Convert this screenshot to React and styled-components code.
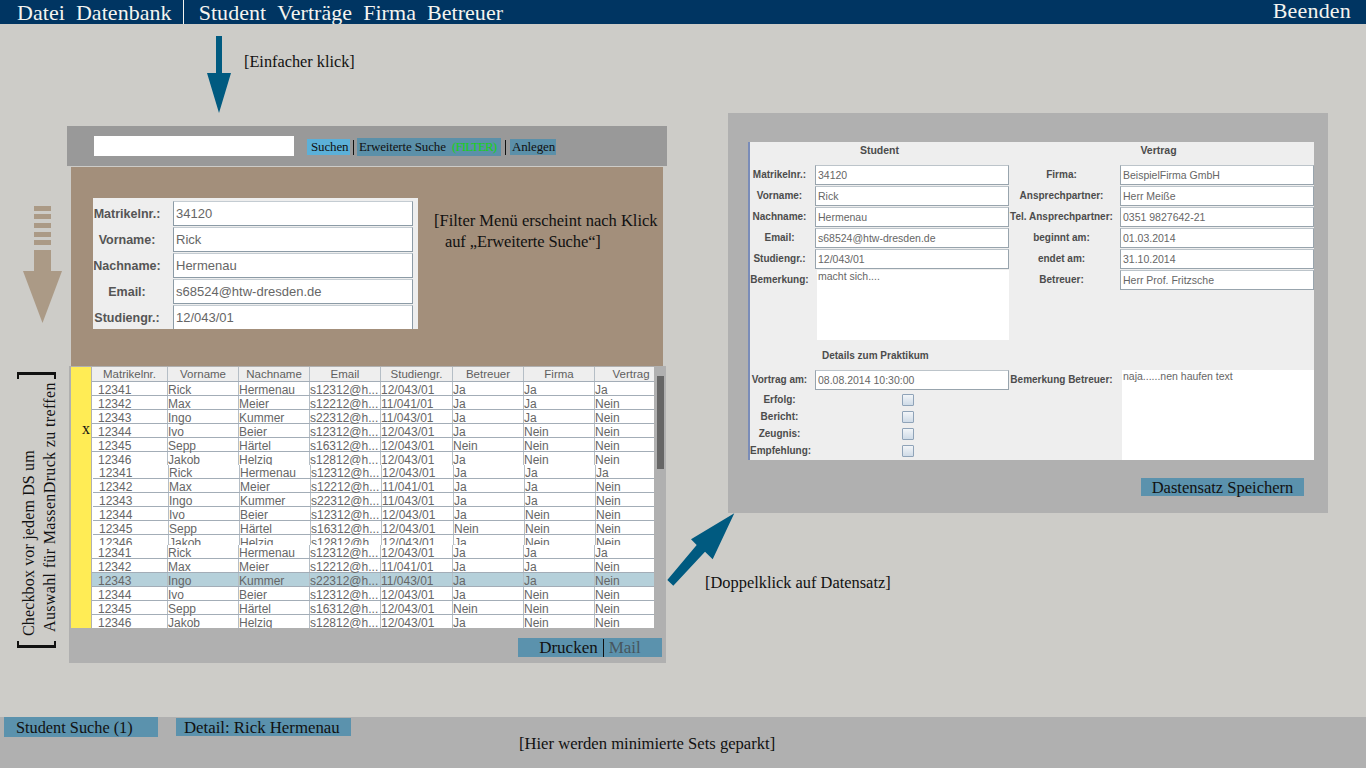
import React from 'react';
import styled, { createGlobalStyle } from 'styled-components';

const serif = '"Liberation Serif", "Times New Roman", serif';
const sans = '"Liberation Sans", Arial, sans-serif';

const GlobalStyle = createGlobalStyle`
    html, body {
        margin: 0;
        padding: 0;
    }
    * {
        box-sizing: border-box;
    }
`;

const Page = styled.div`
    display: flex;
    flex-direction: column;
    width: 1366px;
    height: 768px;
    overflow: hidden;
    background-color: #cdccc8;
    font-family: ${serif};
    color: #111;
`;

/* top menu */
const TopBar = styled.header`
    display: flex;
    justify-content: space-between;
    flex: 0 0 24px;
    height: 24px;
    padding: 0 15px 0 17px;
    overflow: hidden;
    background-color: #003562;
    color: #f4f4f0;
    font-size: 22px;
    line-height: 25px;
    letter-spacing: 0.05px;
`;

const MenuGroup = styled.nav`
    display: flex;
    gap: 11px;
`;

const MenuDivider = styled.span`
    width: 1.5px;
    height: 24px;
    margin-right: 3.5px;
    background-color: #f4f4f0;
`;

const QuitItem = styled.span`
    line-height: 22px;
    letter-spacing: 0.2px;
`;

/* free canvas holding the windows and the notes */
const Canvas = styled.main`
    position: relative;
    display: flex;
    align-items: flex-start;
    flex: 1;
    gap: 61px;
    padding: 89px 0 0 67px;
`;

const MainWindow = styled.section`
    display: flex;
    flex-direction: column;
    width: 600px;
    margin-top: 13px;
`;

const SearchBar = styled.div`
    display: flex;
    align-items: center;
    height: 40px;
    padding-left: 27px;
    background-color: #999999;
    font-size: 13px;
    letter-spacing: -0.15px;
`;

const SearchInput = styled.div`
    width: 200px;
    height: 20px;
    margin-right: 13px;
    background-color: #fff;
`;

const ToolButton = styled.span`
    display: flex;
    align-items: center;
    width: ${({ $width }) => $width}px;
    height: ${({ $tall }) => ($tall ? 18 : 16)}px;
    margin-top: 2px;
    padding-left: ${({ $pad }) => $pad}px;
    background-color: ${({ $light }) => ($light ? '#5cb0d8' : '#5b90a9')};
    white-space: pre;
`;

const ToolDivider = styled.span`
    width: 1px;
    height: 15px;
    margin: 2px ${({ $gap }) => $gap}px 0;
    background-color: #111;
`;

const FilterWord = styled.span`
    color: #17d117;
    letter-spacing: -0.9px;
`;

const FilterPanel = styled.div`
    display: flex;
    gap: 16px;
    height: 199px;
    margin: 1px 4px 0;
    padding: 31px 0 0 22px;
    background-color: #a38f7b;
`;

const FilterForm = styled.div`
    display: grid;
    grid-template-columns: 80px 240px;
    grid-auto-rows: 26px;
    width: 325px;
    height: 131px;
    padding-top: 3px;
    background-color: #eeeeee;
    overflow: hidden;
`;

const FilterLabel = styled.label`
    align-self: center;
    padding-right: 12px;
    font: bold 12.5px ${sans};
    color: #555;
    text-align: center;
    white-space: nowrap;
`;

const FilterField = styled.div`
    height: 25px;
    padding: 4px 0 0 2px;
    background-color: #fff;
    border: 1px solid #8c9ba6;
    border-top-color: #c4ccd2;
    font: 13px ${sans};
    color: #666;
`;

const FilterNote = styled.div`
    padding-top: 12px;
    font-size: 16.5px;
    line-height: 21px;
    white-space: nowrap;
`;

const NoteIndent = styled.span`
    display: block;
    padding-left: 11px;
    letter-spacing: -0.12px;
`;

/* results */
const ResultsArea = styled.div`
    display: flex;
    width: 597px;
    height: 262px;
    margin-left: 2px;
    padding: 1px 0 0 2px;
    background-color: #b0b0b0;
`;

const CheckColumn = styled.div`
    display: flex;
    justify-content: flex-end;
    flex: 0 0 20px;
    margin-right: 1px;
    padding: 53px 1px 0 0;
    background-color: #ffec55;
    font-size: 16px;
`;

const Table = styled.div`
    display: flex;
    flex-direction: column;
    flex: 0 0 561px;
    font: 12px ${sans};
    color: #666;
    background-color: #fff;
`;

const columns = '75px 71px 71px 71px 72px 71px 71px 59px';

const HeaderRow = styled.div`
    display: grid;
    grid-template-columns: ${columns};
    height: 15px;
    background-color: #eeeeee;
    border-bottom: 1px solid #a3adb7;
    font-size: 11.5px;
    line-height: 14px;
    color: #5f5f5f;
`;

const HeaderCell = styled.span`
    border-left: 1px solid #b5bec6;
    text-align: center;
    white-space: nowrap;
    &:first-child {
        border-left: 0;
    }
    &:last-child {
        padding-left: 14px;
    }
`;

const RowBlock = styled.div`
    height: ${({ $height }) => $height}px;
    padding-left: ${({ $shift }) => ($shift ? 1 : 0)}px;
    overflow: hidden;
`;

const Row = styled.div`
    display: grid;
    grid-template-columns: ${columns};
    height: 14px;
    line-height: 16px;
    background-color: ${({ $selected }) => ($selected ? '#b5d0da' : '#fff')};
    border-bottom: 1px solid #a3adb7;
`;

const Cell = styled.span`
    height: 13px;
    border-left: 1px solid #b5bec6;
    white-space: nowrap;
    &:first-child {
        padding-left: 6px;
        border-left: 0;
    }
`;

const ScrollTrack = styled.div`
    flex: 0 0 13px;
    padding: 9px 3px 0;
`;

const ScrollThumb = styled.div`
    width: 7px;
    height: 93px;
    background-color: #666666;
`;

const WindowFooter = styled.div`
    display: flex;
    justify-content: flex-end;
    width: 597px;
    height: 35px;
    margin-left: 2px;
    padding: 10px 4px 0 0;
    background-color: #b0b0b0;
`;

const PrintButton = styled.div`
    display: flex;
    align-items: center;
    justify-content: center;
    gap: 5px;
    width: 144px;
    height: 19px;
    background-color: #5b92ad;
    font-size: 17px;
`;

const PrintDivider = styled.span`
    width: 1px;
    height: 18px;
    background-color: #111;
`;

const MutedAction = styled.span`
    color: #47565e;
`;

/* detail window */
const DetailWindow = styled.section`
    width: 600px;
    height: 400px;
    padding: 29px 14px 0 20px;
    background-color: #b0b0b0;
`;

const DetailForm = styled.div`
    display: grid;
    grid-template-columns: 65px 194px 111px 194px;
    grid-template-rows: 23px repeat(5, 21px) 70px 30px 21px repeat(4, 17.25px);
    height: 318px;
    background-color: #eeeeee;
    border-left: 2px solid #7a8cb8;
    margin-bottom: 18px;
    font-family: ${sans};
    color: #4c4c4c;
`;

const SectionTitle = styled.div`
    grid-column: span 2;
    padding: 2px ${({ $inset }) => $inset || 0}px 0 0;
    font-size: 10.5px;
    font-weight: bold;
    text-align: center;
`;

const SubTitle = styled.div`
    grid-column: 1 / -1;
    align-self: center;
    padding-left: 72px;
    font-size: 10px;
    font-weight: bold;
`;

const DetailLabel = styled.div`
    height: 20px;
    padding-right: 6px;
    font-size: 10px;
    font-weight: bold;
    line-height: 20px;
    text-align: center;
    white-space: nowrap;
`;

const DetailField = styled.div`
    height: 20px;
    padding-left: 2px;
    background-color: #fff;
    border: 1px solid #98a4ad;
    border-top-color: #bcc4ca;
    font-size: 10.5px;
    line-height: 19px;
    color: #666;
    white-space: nowrap;
`;

const RemarkBox = styled.div`
    grid-row: span ${({ $rows }) => $rows || 1};
    margin-left: 2px;
    padding-left: 1px;
    background-color: #fff;
    font-size: 10.5px;
    line-height: 13px;
    color: #666;
`;

const EmptyCell = styled.div``;

const CheckLabel = styled(DetailLabel)`
    align-self: center;
`;

const CheckBox = styled.div`
    align-self: center;
    width: 12px;
    height: 12px;
    margin-left: 87px;
    background: linear-gradient(#f2f5f8, #cfdbe7);
    border: 1px solid #8fa3b8;
    border-radius: 1px;
`;

const SaveRow = styled.div`
    display: flex;
    justify-content: flex-end;
    padding-right: 10px;
`;

const SaveButton = styled.div`
    display: flex;
    align-items: center;
    justify-content: center;
    width: 163px;
    height: 18px;
    padding-top: 1px;
    background-color: #5b92ad;
    font-size: 16.5px;
`;

/* notes and arrows, these sit free on the canvas */
const Note = styled.div`
    position: absolute;
    left: ${({ $x }) => $x}px;
    top: ${({ $y }) => $y}px;
    font-size: ${({ $size }) => $size || 16}px;
    line-height: 18px;
    white-space: nowrap;
`;

const Arrow = styled.svg`
    position: absolute;
    left: ${({ $x }) => $x}px;
    top: ${({ $y }) => $y}px;
`;

const SideNote = styled.div`
    position: absolute;
    left: 17px;
    top: 348px;
    display: flex;
    flex-direction: column;
    justify-content: space-between;
    width: 39px;
    height: 276px;
`;

const Bracket = styled.div`
    height: 7px;
    border: 2px solid #111;
    border-${({ $side }) => $side}-width: 3px;
    border-${({ $side }) => ($side === 'top' ? 'bottom' : 'top')}: 0;
`;

const SideText = styled.div`
    flex: 1;
    padding: 5px 1px 0 0;
    writing-mode: vertical-rl;
    transform: rotate(180deg);
    font-size: 16px;
    line-height: 21px;
    white-space: nowrap;
`;

const SideLine = styled.span`
    display: block;
    padding-top: ${({ $indent }) => $indent || 0}px;
    letter-spacing: ${({ $spacing }) => $spacing}px;
`;

/* dock */
const Dock = styled.footer`
    display: flex;
    align-items: flex-start;
    flex: 0 0 51px;
    gap: 18px;
    padding-left: 4px;
    background-color: #b0b0b0;
`;

const DockTab = styled.div`
    display: flex;
    align-items: center;
    width: ${({ $width }) => $width}px;
    height: ${({ $height }) => $height}px;
    margin-top: ${({ $top }) => $top}px;
    padding: 1px 0 0 ${({ $pad }) => $pad}px;
    background-color: #5b92ad;
    font-size: ${({ $size }) => $size}px;
    white-space: nowrap;
`;

const DockNote = styled.div`
    margin: 18px 0 0 150px;
    font-size: 16.6px;
    line-height: 18px;
    white-space: nowrap;
`;

const menuItems = ['Student', 'Verträge', 'Firma', 'Betreuer'];
const tableHeaders = ['Matrikelnr.', 'Vorname', 'Nachname', 'Email', 'Studiengr.', 'Betreuer', 'Firma', 'Vertrag'];

const tableRows = [
    ['12341', 'Rick', 'Hermenau', 's12312@h...', '12/043/01', 'Ja', 'Ja', 'Ja'],
    ['12342', 'Max', 'Meier', 's12212@h...', '11/041/01', 'Ja', 'Ja', 'Nein'],
    ['12343', 'Ingo', 'Kummer', 's22312@h...', '11/043/01', 'Ja', 'Ja', 'Nein'],
    ['12344', 'Ivo', 'Beier', 's12312@h...', '12/043/01', 'Ja', 'Nein', 'Nein'],
    ['12345', 'Sepp', 'Härtel', 's16312@h...', '12/043/01', 'Nein', 'Nein', 'Nein'],
    ['12346', 'Jakob', 'Helzig', 's12812@h...', '12/043/01', 'Ja', 'Nein', 'Nein'],
];

const filterFields = [
    ['Matrikelnr.:', '34120'],
    ['Vorname:', 'Rick'],
    ['Nachname:', 'Hermenau'],
    ['Email:', 's68524@htw-dresden.de'],
    ['Studiengr.:', '12/043/01'],
];

const detailRows = [
    ['Matrikelnr.:', '34120', 'Firma:', 'BeispielFirma GmbH'],
    ['Vorname:', 'Rick', 'Ansprechpartner:', 'Herr Meiße'],
    ['Nachname:', 'Hermenau', 'Tel. Ansprechpartner:', '0351 9827642-21'],
    ['Email:', 's68524@htw-dresden.de', 'beginnt am:', '01.03.2014'],
    ['Studiengr.:', '12/043/01', 'endet am:', '31.10.2014'],
];

const checkRows = ['Erfolg:', 'Bericht:', 'Zeugnis:', 'Empfehlung:'];

const rowBlocks = [
    { height: 83 },
    { height: 80, shift: true },
    { height: 83, selected: 2 },
];

const App = () => {
    return (
        <Page>
            <GlobalStyle />
            <TopBar>
                <MenuGroup>
                    <span>Datei</span>
                    <span>Datenbank</span>
                    <MenuDivider />
                    {menuItems.map((item) => (
                        <span key={item}>{item}</span>
                    ))}
                </MenuGroup>
                <QuitItem>Beenden</QuitItem>
            </TopBar>

            <Canvas>
                <MainWindow>
                    <SearchBar>
                        <SearchInput />
                        <ToolButton $light $width={43} $pad={4}>Suchen</ToolButton>
                        <ToolDivider $gap={3} />
                        <ToolButton $tall $width={144} $pad={2}>Erweiterte Suche  <FilterWord>(FILTER)</FilterWord></ToolButton>
                        <ToolDivider $gap={4} />
                        <ToolButton $width={46} $pad={2}>Anlegen</ToolButton>
                    </SearchBar>

                    <FilterPanel>
                        <FilterForm>
                            {filterFields.map(([label, value]) => (
                                <React.Fragment key={label}>
                                    <FilterLabel>{label}</FilterLabel>
                                    <FilterField>{value}</FilterField>
                                </React.Fragment>
                            ))}
                        </FilterForm>
                        <FilterNote>
                            [Filter Menü erscheint nach Klick
                            <NoteIndent>auf „Erweiterte Suche“]</NoteIndent>
                        </FilterNote>
                    </FilterPanel>

                    <ResultsArea>
                        <CheckColumn>x</CheckColumn>
                        <Table>
                            <HeaderRow>
                                {tableHeaders.map((head) => (
                                    <HeaderCell key={head}>{head}</HeaderCell>
                                ))}
                            </HeaderRow>
                            {rowBlocks.map((block, blockIndex) => (
                                <RowBlock key={blockIndex} $height={block.height} $shift={block.shift}>
                                    {tableRows.map((row, rowIndex) => (
                                        <Row key={row[0]} $selected={block.selected === rowIndex}>
                                            {row.map((value, cellIndex) => (
                                                <Cell key={cellIndex}>{value}</Cell>
                                            ))}
                                        </Row>
                                    ))}
                                </RowBlock>
                            ))}
                        </Table>
                        <ScrollTrack>
                            <ScrollThumb />
                        </ScrollTrack>
                    </ResultsArea>

                    <WindowFooter>
                        <PrintButton>
                            <span>Drucken</span>
                            <PrintDivider />
                            <MutedAction>Mail</MutedAction>
                        </PrintButton>
                    </WindowFooter>
                </MainWindow>

                <DetailWindow>
                    <DetailForm>
                        <SectionTitle>Student</SectionTitle>
                        <SectionTitle $inset={6}>Vertrag</SectionTitle>
                        {detailRows.map(([labelA, valueA, labelB, valueB]) => (
                            <React.Fragment key={labelA}>
                                <DetailLabel>{labelA}</DetailLabel>
                                <DetailField>{valueA}</DetailField>
                                <DetailLabel>{labelB}</DetailLabel>
                                <DetailField>{valueB}</DetailField>
                            </React.Fragment>
                        ))}
                        <DetailLabel>Bemerkung:</DetailLabel>
                        <RemarkBox>macht sich....</RemarkBox>
                        <DetailLabel>Betreuer:</DetailLabel>
                        <DetailField>Herr Prof. Fritzsche</DetailField>
                        <SubTitle>Details zum Praktikum</SubTitle>
                        <DetailLabel>Vortrag am:</DetailLabel>
                        <DetailField>08.08.2014 10:30:00</DetailField>
                        <DetailLabel>Bemerkung Betreuer:</DetailLabel>
                        <RemarkBox $rows={5}>naja......nen haufen text</RemarkBox>
                        {checkRows.map((label) => (
                            <React.Fragment key={label}>
                                <CheckLabel>{label}</CheckLabel>
                                <CheckBox />
                                <EmptyCell />
                            </React.Fragment>
                        ))}
                    </DetailForm>
                    <SaveRow>
                        <SaveButton>Dastensatz Speichern</SaveButton>
                    </SaveRow>
                </DetailWindow>

                <Arrow $x={207} $y={12} width="24" height="77" viewBox="0 0 24 77">
                    <path d="M9 0h6v37h9L12 77 0 37h9z" fill="#005a80" />
                </Arrow>
                <Note $x={244} $y={29} $size={16.3}>[Einfacher klick]</Note>

                <Arrow $x={23} $y={182} width="39" height="117" viewBox="0 0 39 117">
                    <g fill="#ab9a86">
                        <rect x="11" y="0" width="17" height="5" />
                        <rect x="11" y="8" width="17" height="5" />
                        <rect x="11" y="17" width="17" height="5" />
                        <rect x="11" y="26" width="17" height="5" />
                        <rect x="11" y="34" width="17" height="5" />
                        <path d="M11 44h17v21h11L19.500 117 0 65h11z" />
                    </g>
                </Arrow>

                <SideNote>
                    <Bracket $side="top" />
                    <SideText>
                        <SideLine $spacing={0.15}>Checkbox vor jedem DS um</SideLine>
                        <SideLine $spacing={0.35} $indent={4}>Auswahl für MassenDruck zu treffen</SideLine>
                    </SideText>
                    <Bracket $side="bottom" />
                </SideNote>

                <Arrow $x={665} $y={487} width="72" height="76" viewBox="0 0 72 76">
                    <path d="M69.300 2.300 47.700 48.300 40 40.700 8.300 74.700 2.300 69 31.700 34 26 28.300z" fill="#005a80" />
                </Arrow>
                <Note $x={705} $y={550} $size={16.4}>[Doppelklick auf Datensatz]</Note>
            </Canvas>

            <Dock>
                <DockTab $width={154} $height={20} $top={0} $pad={12} $size={16.3}>Student Suche (1)</DockTab>
                <DockTab $width={175} $height={18} $top={1} $pad={8} $size={16.8}>Detail: Rick Hermenau</DockTab>
                <DockNote>[Hier werden minimierte Sets geparkt]</DockNote>
            </Dock>
        </Page>
    );
};

export default App;
